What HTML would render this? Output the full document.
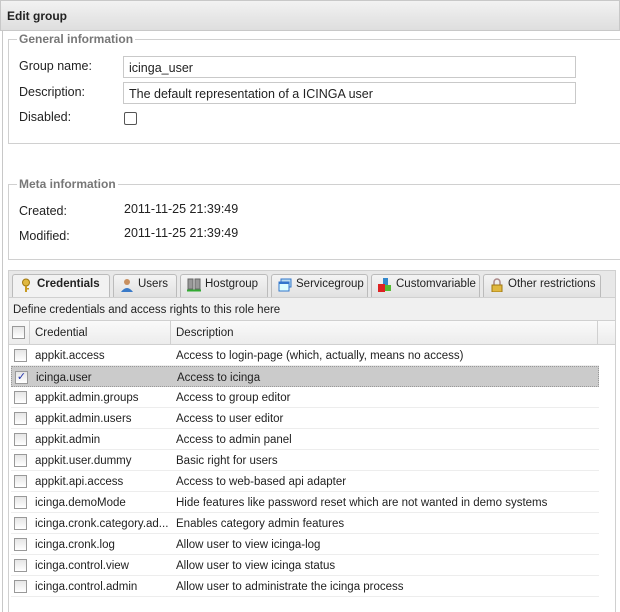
<!DOCTYPE html>
<html><head><style>
*{box-sizing:border-box;margin:0;padding:0}
body{width:620px;height:612px;background:#fff;font-family:"Liberation Sans","DejaVu Sans",sans-serif;font-size:12px;color:#222;position:relative;overflow:hidden}
.abs{position:absolute}
.hdr{left:0;top:0;width:620px;height:31px;background:linear-gradient(#f2f2f2,#dedede);border:1px solid #c8c8c8;font-weight:bold;font-size:12px;padding:8px 0 0 6px;color:#222}
.outer{left:2px;top:31px;width:620px;height:581px;border-left:1px solid #c8c8c8}
fieldset{position:absolute;border:1px solid #d0d0d0;border-right:none}
legend{font-weight:bold;color:#777;padding:0 2px;margin-left:8px;font-size:12px}
.inp{position:absolute;height:22px;border:1px solid #c9c9c9;background:#fff;padding:4px 5px;font-size:12.5px;color:#222}
.lbl{position:absolute;font-size:12.5px;color:#222}
.cb{position:absolute;width:13px;height:13px;border:1px solid #555;border-radius:2px;background:#fff}
.tabs{left:8px;top:270px;width:608px;height:27px;background:#e8e8e8;border:1px solid #d0d0d0;border-bottom:none}
.tab{position:absolute;top:3px;height:24px;border:1px solid #bbb;border-bottom:none;border-radius:3px 3px 0 0;background:linear-gradient(#f4f4f4,#e0e0e0);font-size:11.5px;padding:3px 0 0 24px;color:#222}
.tab.act{background:#f2f2f2;font-weight:bold;height:25px}
.ico{position:absolute;left:6px;top:3px;width:14px;height:14px}
.bar{left:8px;top:297px;width:608px;height:24px;background:#f0f0f0;border:1px solid #d0d0d0;padding:6px 0 0 4px;font-size:11.5px}
.grid{left:8px;top:321px;width:608px;height:291px;border-left:1px solid #d0d0d0;border-right:1px solid #d0d0d0}
.gh{position:absolute;left:0;top:0;width:606px;height:24px;background:linear-gradient(#fafafa,#ececec);border-bottom:1px solid #d0d0d0;font-size:11.5px}
.gh div{position:absolute;top:0;height:23px;border-right:1px solid #d0d0d0;padding:6px 0 0 5px}
.row{position:absolute;left:2px;width:588px;height:21px;border-bottom:1px solid #ededed;font-size:11.5px}
.row.sel{background:#cbcbcb;border:1px dotted #999}
.row span{position:absolute;top:5px}
.gcb{position:absolute;left:3px;top:4px;width:13px;height:13px;border:1px solid #999;background:linear-gradient(#e6e6e6,#fff)}
</style></head><body>
<div class="abs hdr">Edit group</div>
<div class="abs outer"></div>
<fieldset style="left:8px;top:32px;width:612px;height:112px"><legend>General information</legend></fieldset>
<div class="lbl" style="left:19px;top:59px">Group name:</div>
<div class="inp" style="left:123px;top:56px;width:453px">icinga_user</div>
<div class="lbl" style="left:19px;top:85px">Description:</div>
<div class="inp" style="left:123px;top:82px;width:453px">The default representation of a ICINGA user</div>
<div class="lbl" style="left:19px;top:110px">Disabled:</div>
<div class="cb" style="left:124px;top:112px"></div>
<fieldset style="left:8px;top:177px;width:612px;height:83px"><legend>Meta information</legend></fieldset>
<div class="lbl" style="left:19px;top:204px">Created:</div>
<div class="lbl" style="left:124px;top:202px">2011-11-25 21:39:49</div>
<div class="lbl" style="left:19px;top:229px">Modified:</div>
<div class="lbl" style="left:124px;top:226px">2011-11-25 21:39:49</div>

<div class="abs tabs">
<div class="tab act" style="left:3px;width:98px"><svg class="ico" viewBox="0 0 14 14"><circle cx="7" cy="4.5" r="3.5" fill="#e0b840" stroke="#a07810"/><rect x="6" y="8" width="2" height="6" fill="#c89a20"/><rect x="8" y="10" width="2" height="1.5" fill="#c89a20"/></svg>Credentials</div>
<div class="tab" style="left:104px;width:64px"><svg class="ico" viewBox="0 0 14 14"><circle cx="7" cy="4" r="3" fill="#c89060"/><path d="M1 14 Q7 6 13 14Z" fill="#3a7ac8"/></svg>Users</div>
<div class="tab" style="left:171px;width:88px"><svg class="ico" viewBox="0 0 14 14"><rect x="1" y="1" width="5" height="10" fill="#999" stroke="#666"/><rect x="8" y="1" width="5" height="10" fill="#999" stroke="#666"/><path d="M0 12.5H14" stroke="#3a3" stroke-width="2"/></svg>Hostgroup</div>
<div class="tab" style="left:262px;width:97px"><svg class="ico" viewBox="0 0 14 14"><rect x="3" y="1" width="10" height="8" fill="#bde" stroke="#37c"/><rect x="1" y="4" width="10" height="9" fill="#dff" stroke="#37c"/><rect x="1" y="4" width="10" height="2" fill="#37c"/></svg>Servicegroup</div>
<div class="tab" style="left:362px;width:109px"><svg class="ico" viewBox="0 0 14 14"><rect x="5" y="0" width="5" height="7" fill="#38c"/><rect x="0" y="6" width="7" height="8" fill="#d22"/><rect x="7" y="7" width="6" height="6" fill="#5b3"/></svg>Customvariable</div>
<div class="tab" style="left:474px;width:118px"><svg class="ico" viewBox="0 0 14 14"><path d="M4 7V4a3 3 0 0 1 6 0v3" fill="none" stroke="#a88" stroke-width="1.5"/><rect x="2" y="7" width="10" height="7" fill="#e0b840" stroke="#a07810"/></svg>Other restrictions</div>
</div>
<div class="abs bar">Define credentials and access rights to this role here</div>
<div class="abs grid">
<div class="gh"><div style="left:0;width:21px"><span class="gcb" style="left:3px;top:5px"></span></div><div style="left:21px;width:141px">Credential</div><div style="left:162px;width:427px">Description</div></div>
<div class="row" style="top:24px"><i class="gcb"></i><span style="left:24px">appkit.access</span><span style="left:165px">Access to login-page (which, actually, means no access)</span></div>
<div class="row sel" style="top:45px"><i class="gcb" style="color:#23a;font-style:normal;font-size:11px;line-height:11px;text-align:center">✓</i><span style="left:24px">icinga.user</span><span style="left:165px">Access to icinga</span></div>
<div class="row" style="top:66px"><i class="gcb"></i><span style="left:24px">appkit.admin.groups</span><span style="left:165px">Access to group editor</span></div>
<div class="row" style="top:87px"><i class="gcb"></i><span style="left:24px">appkit.admin.users</span><span style="left:165px">Access to user editor</span></div>
<div class="row" style="top:108px"><i class="gcb"></i><span style="left:24px">appkit.admin</span><span style="left:165px">Access to admin panel</span></div>
<div class="row" style="top:129px"><i class="gcb"></i><span style="left:24px">appkit.user.dummy</span><span style="left:165px">Basic right for users</span></div>
<div class="row" style="top:150px"><i class="gcb"></i><span style="left:24px">appkit.api.access</span><span style="left:165px">Access to web-based api adapter</span></div>
<div class="row" style="top:171px"><i class="gcb"></i><span style="left:24px">icinga.demoMode</span><span style="left:165px">Hide features like password reset which are not wanted in demo systems</span></div>
<div class="row" style="top:192px"><i class="gcb"></i><span style="left:24px">icinga.cronk.category.ad...</span><span style="left:165px">Enables category admin features</span></div>
<div class="row" style="top:213px"><i class="gcb"></i><span style="left:24px">icinga.cronk.log</span><span style="left:165px">Allow user to view icinga-log</span></div>
<div class="row" style="top:234px"><i class="gcb"></i><span style="left:24px">icinga.control.view</span><span style="left:165px">Allow user to view icinga status</span></div>
<div class="row" style="top:255px"><i class="gcb"></i><span style="left:24px">icinga.control.admin</span><span style="left:165px">Allow user to administrate the icinga process</span></div>
</div>
</body></html>
